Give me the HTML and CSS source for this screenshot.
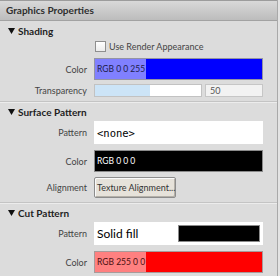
FILE: index.html
```html
<!DOCTYPE html>
<html>
<head>
    <title>Graphics Properties</title>
    <link rel="stylesheet" href="styles.css">
</head>
<body>
    <div class="panel">
        <div class="title">Graphics Properties</div>

        <div class="section">
            <div class="sec-head">
                <svg class="tri" width="7" height="6" viewBox="0 0 7 6"><polygon points="0,0 7,0 3.5,6" fill="#111"/></svg>
                Shading
            </div>
            <div class="check-row">
                <span class="check"></span>
                <span>Use Render Appearance</span>
            </div>
            <div class="row color-row">
                <label>Color</label>
                <div class="swatch blue"><span class="tag">RGB 0 0 255</span></div>
            </div>
            <div class="row slider-row">
                <label>Transparency</label>
                <div class="slider"><div class="fill" style="width: 55px"></div></div>
                <div class="num">50</div>
            </div>
        </div>

        <div class="section">
            <div class="sec-head">
                <svg class="tri" width="7" height="6" viewBox="0 0 7 6"><polygon points="0,0 7,0 3.5,6" fill="#111"/></svg>
                Surface Pattern
            </div>
            <div class="row pattern-row">
                <label>Pattern</label>
                <div class="pattern mono">&lt;none&gt;</div>
            </div>
            <div class="row color-row">
                <label>Color</label>
                <div class="swatch black"><span class="tag">RGB 0 0 0</span></div>
            </div>
            <div class="row button-row">
                <label>Alignment</label>
                <button class="btn">Texture Alignment...</button>
            </div>
        </div>

        <div class="section last">
            <div class="sec-head">
                <svg class="tri" width="7" height="6" viewBox="0 0 7 6"><polygon points="0,0 7,0 3.5,6" fill="#111"/></svg>
                Cut Pattern
            </div>
            <div class="row pattern-row">
                <label>Pattern</label>
                <div class="pattern solid">
                    <span>Solid fill</span>
                    <span class="fill-box"></span>
                </div>
            </div>
            <div class="row color-row">
                <label>Color</label>
                <div class="swatch red"><span class="tag">RGB 255 0 0</span></div>
            </div>
        </div>
    </div>
</body>
</html>
```

FILE: styles.css
```css
body {
    margin: 0;
    background-color: #e4e4e4;
    font-family: Lato, "Liberation Sans", sans-serif;
    font-size: 9px;
    color: #444;
}
.panel {
    width: 278px;
    height: 276px;
    box-sizing: border-box;
    background-color: #dcdcdc;
    border-right: 1px solid #a9a9a9;
}
.title {
    height: 19px;
    line-height: 19px;
    padding-left: 6px;
    border-top: 1px solid #9c9c9c;
    border-bottom: 1px solid #a2a2a2;
    background: linear-gradient(#d9d9d9, #bcbcbc);
    font-size: 10px;
    font-weight: bold;
    color: #2e2e2e;
}
.section {
    border-bottom: 1px solid #c4c4c4;
    box-shadow: 0 1px 0 #ececec;
    padding-bottom: 4px;
}
.section.last {
    border-bottom: none;
    box-shadow: none;
}
.sec-head {
    height: 19px;
    padding-left: 8px;
    font-size: 10px;
    font-weight: bold;
    color: #1e1e1e;
    display: flex;
    align-items: center;
}
.tri {
    margin-right: 3px;
}
.check-row {
    display: flex;
    align-items: center;
    height: 12px;
    padding-left: 95px;
}
.check {
    width: 9px;
    height: 9px;
    border: 1px solid #8f8f8f;
    background: linear-gradient(#ffffff, #ececec);
    margin-right: 3px;
}
.row {
    display: flex;
    align-items: center;
}
.row label {
    width: 94px;
    padding-right: 7px;
    text-align: right;
    box-sizing: border-box;
}
.color-row {
    height: 22px;
    margin-top: 6px;
}
.slider-row {
    height: 13px;
    margin-top: 4px;
}
.pattern-row {
    height: 23px;
}
.button-row {
    height: 21px;
    margin-top: 5px;
}
.swatch {
    width: 169px;
    height: 22px;
    box-sizing: border-box;
    border: 1px solid #9494a4;
    display: flex;
}
.swatch .tag {
    line-height: 20px;
    padding: 0 1px 0 2px;
    font-size: 8.5px;
    white-space: nowrap;
}
.blue {
    background-color: #0000ff;
}
.blue .tag {
    background-color: #8080ff;
    color: #1c1c4a;
}
.black {
    background-color: #000;
    border-color: #8a8a8a;
}
.black .tag {
    color: #fff;
}
.red {
    background-color: #ff0000;
    border-color: #a89a9a;
}
.red .tag {
    background-color: #ff8080;
    color: #4a1010;
}
.slider {
    width: 108px;
    height: 13px;
    box-sizing: border-box;
    border: 1px solid #c2c2c2;
    background-color: #fff;
}
.slider .fill {
    height: 100%;
    background-color: #cce4f7;
}
.num {
    width: 58px;
    height: 13px;
    box-sizing: border-box;
    margin-left: 3px;
    border: 1px solid #c6c6c6;
    background-color: #f2f2f2;
    padding-left: 4px;
    line-height: 11px;
    color: #555;
}
.pattern {
    width: 169px;
    height: 23px;
    background-color: #fff;
    box-sizing: border-box;
    padding-left: 3px;
    display: flex;
    align-items: center;
    color: #000;
}
.mono {
    font-family: "DejaVu Sans Mono", monospace;
    font-size: 10.5px;
}
.solid {
    font-size: 12px;
    justify-content: space-between;
    padding-right: 3px;
}
.fill-box {
    width: 82px;
    height: 17px;
    box-sizing: border-box;
    border: 1px solid #8a8a8a;
    background-color: #000;
}
.btn {
    width: 82px;
    height: 21px;
    padding: 0 2px;
    white-space: nowrap;
    font-family: Lato, "Liberation Sans", sans-serif;
    font-size: 9px;
    color: #333;
    background-color: #e6e2da;
    border: 1px solid #8c8c8c;
    border-radius: 2px;
    box-shadow: inset 1px 1px 0 #fafafa, inset -1px -1px 0 #b4b0a8;
}
```
